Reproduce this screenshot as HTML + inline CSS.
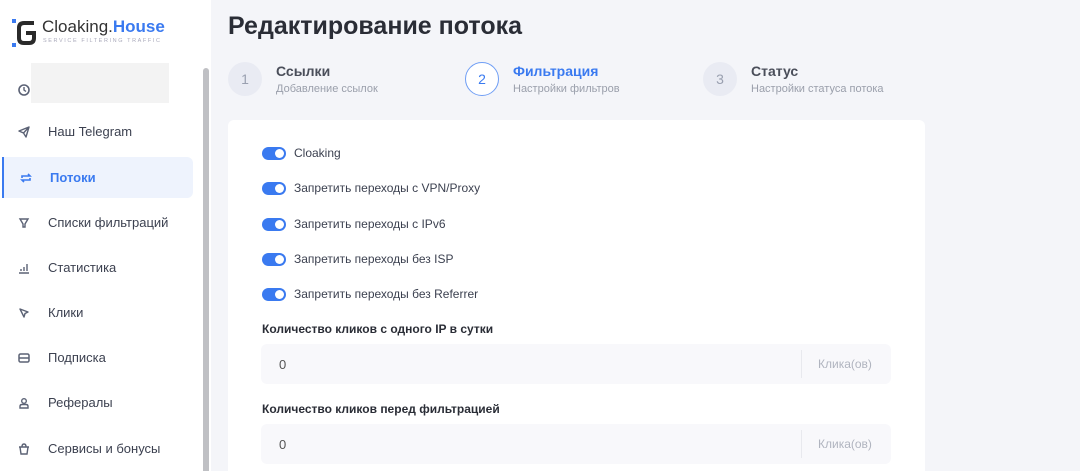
<!DOCTYPE html><html><head><meta charset="utf-8"><style>
*{box-sizing:border-box;margin:0;padding:0}
html,body{width:1080px;height:471px;overflow:hidden}
body{background:#f4f5f9;font-family:"Liberation Sans",sans-serif;position:relative;color:#2b2f3a}
.sb{position:absolute;left:0;top:0;width:211px;height:471px;background:#fff}
.scr{position:absolute;left:203px;top:68px;width:6px;height:410px;background:#bfc0c4;border-radius:3px}
.nav{position:absolute;left:0;width:193px;height:41px;display:flex;align-items:center;font-size:13px;color:#3c4150}
.nav svg{margin:0 18px 0 18px;flex:none}
.act{background:#eef3fd;border-left:2px solid #3a7af0;color:#3a7af0;font-weight:bold;border-radius:0 6px 6px 0}
.act svg{margin-left:16px}
h1{position:absolute;left:228px;top:12px;font-size:25px;font-weight:bold;color:#2a2d36}
.st{position:absolute;top:62px;display:flex;align-items:center}
.circ{width:34px;height:34px;border-radius:50%;background:#e9ebf3;color:#9aa0b0;display:flex;align-items:center;justify-content:center;font-size:14px;margin-right:14px}
.st b{display:block;font-size:14px;color:#4a4e5a}
.st span{display:block;font-size:11px;color:#9a9fab;margin-top:4px}
.card{position:absolute;left:228px;top:120px;width:697px;height:360px;background:#fff;border-radius:6px}
.tg{position:absolute;left:262px;display:flex;align-items:center;font-size:12px;color:#3c4150}
.sw{width:24px;height:13px;border-radius:7px;background:#3a7af0;position:relative;margin-right:8px}
.sw:after{content:"";position:absolute;right:2px;top:2px;width:9px;height:9px;border-radius:50%;background:#fff}
.lb{position:absolute;left:262px;font-size:12px;font-weight:bold;color:#2a2d36}
.in{position:absolute;left:261px;width:630px;height:40px;background:#f8f8fb;border-radius:6px;font-size:13px;color:#555}
.in .v{position:absolute;left:18px;top:13px}
.in .u{position:absolute;right:0;top:6px;height:28px;width:90px;border-left:1px solid #e8e9ee;color:#b0b4bf;font-size:12px;padding:7px 0 0 16px}
</style></head><body>
<div class="sb">
<svg style="position:absolute;left:12px;top:19px" width="24" height="28" viewBox="0 0 24 28"><rect x="0" y="0" width="4" height="4" fill="#3a7af0"/><rect x="0" y="24" width="4" height="4" fill="#3a7af0"/><path d="M22 4 H12 Q7 4 7 9 V19 Q7 24 12 24 H17 Q22 24 22 19 V14 H14" stroke="#2a2a2a" stroke-width="4" fill="none"/></svg>
<div style="position:absolute;left:42px;top:17px;font-size:17px;color:#333">Cloaking.<b style="color:#3a7af0">House</b></div>
<div style="position:absolute;left:43px;top:38px;font-size:5.5px;letter-spacing:1.6px;color:#aab">SERVICE FILTERING TRAFFIC</div>
<div style="position:absolute;left:31px;top:63px;width:138px;height:40px;background:#f3f3f3"></div>
<div class="nav" style="top:69px"><svg width="12" height="12" viewBox="0 0 12 12"><circle cx="6" cy="6" r="5" stroke="#5b6275" stroke-width="1.6" fill="none"/><path d="M6 3V6L8 7.5" stroke="#5b6275" stroke-width="1.4" fill="none"/></svg></div>
<div class="nav" style="top:111px"><svg width="12" height="12" viewBox="0 0 12 12"><path d="M1 5L11 1L8 11L5.5 7Z M5.5 7L11 1" stroke="#5b6275" stroke-width="1.4" fill="none" stroke-linejoin="round"/></svg>Наш Telegram</div>
<div class="nav act" style="top:157px;left:2px;width:191px"><svg width="12" height="12" viewBox="0 0 12 12"><path d="M2 6V4H10L8 2 M10 6V8H2L4 10" stroke="#3a7af0" stroke-width="1.6" fill="none"/></svg>Потоки</div>
<div class="nav" style="top:202px"><svg width="12" height="12" viewBox="0 0 12 12"><path d="M2 2H10L7 7V10H5V7Z" stroke="#5b6275" stroke-width="1.4" fill="none"/></svg>Списки фильтраций</div>
<div class="nav" style="top:247px"><svg width="12" height="12" viewBox="0 0 12 12"><path d="M1 11H11 M3 9V7 M6 9V5 M9 9V2" stroke="#5b6275" stroke-width="1.4"/></svg>Статистика</div>
<div class="nav" style="top:292px"><svg width="12" height="12" viewBox="0 0 12 12"><path d="M2 2L10 5L7 6.5L6 10Z" stroke="#5b6275" stroke-width="1.4" fill="none" stroke-linejoin="round"/></svg>Клики</div>
<div class="nav" style="top:337px"><svg width="12" height="12" viewBox="0 0 12 12"><rect x="1" y="2" width="10" height="8" rx="1.5" stroke="#5b6275" stroke-width="1.5" fill="none"/><path d="M1 6H11" stroke="#5b6275" stroke-width="1.5"/></svg>Подписка</div>
<div class="nav" style="top:382px"><svg width="12" height="12" viewBox="0 0 12 12"><circle cx="6" cy="4" r="2.3" stroke="#5b6275" stroke-width="1.4" fill="none"/><path d="M2 11V9.5Q2 7.5 4 7.5H8Q10 7.5 10 9.5V11Z" stroke="#5b6275" stroke-width="1.4" fill="none"/></svg>Рефералы</div>
<div class="nav" style="top:428px"><svg width="12" height="12" viewBox="0 0 12 12"><path d="M1 4H11 M2 4L3 11H9L10 4 M4 4Q4 1 6 1Q8 1 8 4" stroke="#5b6275" stroke-width="1.4" fill="none"/></svg>Сервисы и бонусы</div>
<div class="scr"></div>
</div>
<h1>Редактирование потока</h1>
<div class="st" style="left:228px"><div class="circ">1</div><div><b>Ссылки</b><span>Добавление ссылок</span></div></div>
<div class="st" style="left:465px"><div class="circ" style="background:#fff;border:1.5px solid #6f9ef5;color:#3a7af0">2</div><div><b style="color:#3a7af0">Фильтрация</b><span>Настройки фильтров</span></div></div>
<div class="st" style="left:703px"><div class="circ">3</div><div><b>Статус</b><span>Настройки статуса потока</span></div></div>
<div class="card"></div>
<div class="tg" style="top:146px"><div class="sw"></div>Cloaking</div>
<div class="tg" style="top:181px"><div class="sw"></div>Запретить переходы с VPN/Proxy</div>
<div class="tg" style="top:217px"><div class="sw"></div>Запретить переходы с IPv6</div>
<div class="tg" style="top:252px"><div class="sw"></div>Запретить переходы без ISP</div>
<div class="tg" style="top:287px"><div class="sw"></div>Запретить переходы без Referrer</div>
<div class="lb" style="top:322px">Количество кликов с одного IP в сутки</div>
<div class="in" style="top:344px"><span class="v">0</span><div class="u">Клика(ов)</div></div>
<div class="lb" style="top:402px">Количество кликов перед фильтрацией</div>
<div class="in" style="top:424px"><span class="v">0</span><div class="u">Клика(ов)</div></div>
</body></html>
